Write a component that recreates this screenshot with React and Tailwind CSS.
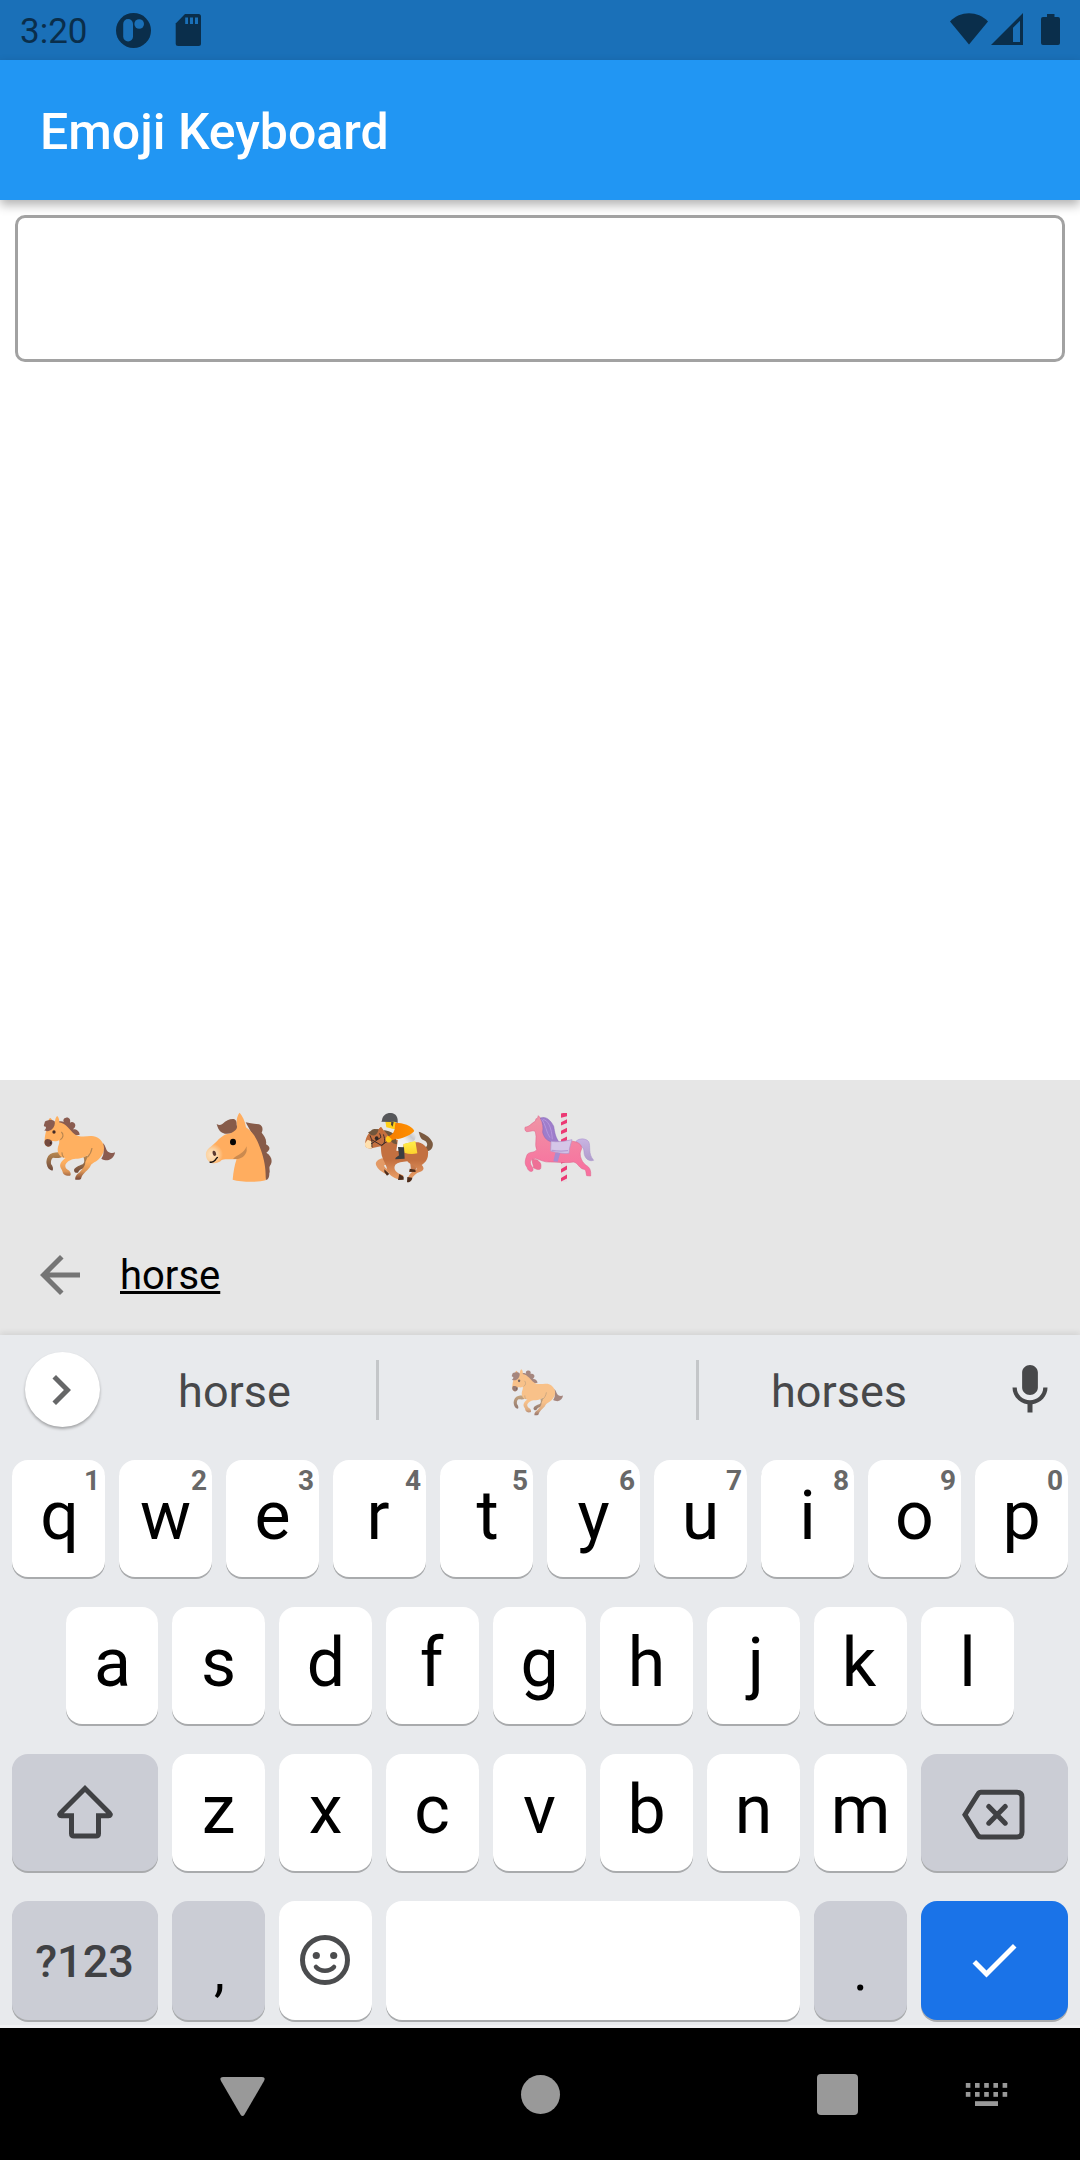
const DARK = "#0a2e4b";
const INK = "#47484a";

function Horse({ className }) {
  return (
    <svg className={className} viewBox="60 60 240 225">
      <defs>
        <linearGradient id="rearLeg" x1="0" y1="0" x2="0" y2="1">
          <stop offset="0" stopColor="#b98a52" />
          <stop offset="1" stopColor="#6f4a3c" />
        </linearGradient>
        <linearGradient id="coat" gradientUnits="userSpaceOnUse" x1="0" y1="215" x2="0" y2="268">
          <stop offset="0" stopColor="#ffb060" />
          <stop offset="0.55" stopColor="#dc9556" />
          <stop offset="1" stopColor="#7a4a3a" />
        </linearGradient>
      </defs>
      <path d="M249 160C258 168 256 178 264 185C271 190 280 190 285 187C284 199 275 209 262 211C255 211 249 209 244 206C252 196 252 184 248 175Z" fill="#8a5c50" />
      <path d="M124 186C111 188 100 186 91 192C81 199 78 213 80 222C82 233 87 240 97 242C101 238 99 229 93 222C92 213 94 206 99 203C108 203 116 206 126 201Z" fill="url(#rearLeg)" />
      <path d="M190 200C194 210 194 218 188 223C176 228 164 232 162 240C162 247 168 250 174 248C179 237 187 236 198 233C207 224 207 205 207 196Z" fill="url(#rearLeg)" />
      <path d="M108 98C118 92 126 93 132 96C128 91 131 84 138 83C147 81 153 89 150 98C156 93 166 98 166 106C166 112 162 116 159 118C169 117 178 123 179 134L158 138L116 112Z" fill="#8a5c50" />
      <path d="M88 98C83 91 88 85 91 84C96 87 98 93 98 98Z" fill="#f5a254" />
      <path d="M77 128C81 110 93 97 105 96C105 88 108 80 112 78C117 84 119 91 117 97C140 101 149 121 163 132C174 142 196 140 211 138C229 136 245 148 250 163C256 181 248 197 236 208C224 219 216 218 211 229C207 239 188 250 184 263C184 270 174 270 166 269C164 260 171 252 179 247C186 237 196 229 196 216C200 208 202 203 203 195C193 204 175 206 162 207C151 209 139 216 136 225C135 235 142 239 148 242C154 250 153 258 148 257C139 259 130 255 128 247C128 241 122 236 121 231C118 219 130 208 137 204C119 203 113 191 113 178C114 166 120 161 117 151C108 157 98 150 96 154C96 163 92 170 84 170C75 168 72 159 74 151C74 145 75 136 77 128Z" fill="url(#coat)" />
      <path d="M74 98C74 91 96 87 104 94C106 102 103 111 96 118C90 124 80 125 72 121C79 117 77 115 78 110C74 110 70 108 72 104Z" fill="#8a5c50" />
      <path d="M76 149C82 145 91 148 96 153C99 163 93 170 85 170C76 169 72 161 74 153Z" fill="#754b3f" />
      <ellipse cx="102" cy="126" rx="5" ry="5.5" fill="#422b28" />
      <ellipse cx="92" cy="159" rx="2.5" ry="4" fill="#3d2924" />
      <path d="M124 126C131 132 131 143 121 149M126 187C125 193 128 198 131 202M216 174C214 187 207 197 202 202" fill="none" stroke="#b88650" strokeWidth="3.5" />
    </svg>
  );
}

function HorseHead() {
  return (
    <svg className="h-[75px] w-[80px]" viewBox="540 60 240 225">
      <defs>
        <radialGradient id="muzzle" gradientUnits="userSpaceOnUse" cx="575" cy="194" r="34">
          <stop offset="0" stopColor="#ffe3c0" />
          <stop offset="0.5" stopColor="#fbd3a3" />
          <stop offset="1" stopColor="#ffad5f" />
        </radialGradient>
      </defs>
      <path d="M677 97C690 100 704 102 717 103C728 106 730 119 725 128C732 137 741 147 738 163C754 171 749 181 739 188C755 198 758 213 752 224C744 233 752 241 748 250C748 262 745 270 737 270L712 160Z" fill="#875b49" />
      <path d="M649 210L656 122L678 112C704 130 713 153 723 181C734 214 738 238 737 271C716 277 664 277 638 269C640 245 644 225 649 210Z" fill="#ffad5f" />
      <path d="M650 105C648 91 653 73 659 68C667 78 675 92 678 112C681 139 680 160 679 173C674 202 654 209 640 208C625 208 611 206 604 211C598 219 585 220 576 220C562 214 556 201 558 188C561 175 581 164 592 152C602 141 619 130 632 130Z" fill="url(#muzzle)" />
      <path d="M680 169C670 192 656 192 639 206C657 211 676 201 680 183Z" fill="#cb8a4f" />
      <path d="M590 102C597 107 602 105 608 101C617 92 628 87 638 87C646 87 650 91 650 105C653 112 650 117 646 121C635 132 618 134 609 129C599 125 594 117 590 102Z" fill="#875b49" />
      <ellipse cx="639" cy="156" rx="9" ry="10" fill="#050505" />
      <ellipse cx="583" cy="190" rx="5" ry="8" transform="rotate(-20 583 190)" fill="#5b3a31" />
      <path d="M569 216C576 218 582 215 586 210C590 205 589 203 594 202" fill="none" stroke="#17110f" strokeWidth="4" />
    </svg>
  );
}

function Jockey() {
  return (
    <svg className="h-[75px] w-[80px]" viewBox="60 60 240 225">
      <defs>
        <linearGradient id="bay" gradientUnits="userSpaceOnUse" x1="0" y1="210" x2="0" y2="275">
          <stop offset="0" stopColor="#c37040" />
          <stop offset="1" stopColor="#efa56c" />
        </linearGradient>
        <linearGradient id="silk" x1="0" y1="0" x2="1" y2="0">
          <stop offset="0" stopColor="#f57c00" />
          <stop offset="1" stopColor="#ff9100" />
        </linearGradient>
        <linearGradient id="cloth" x1="0" y1="0" x2="0" y2="1">
          <stop offset="0" stopColor="#fff04d" />
          <stop offset="1" stopColor="#fdd32c" />
        </linearGradient>
        <linearGradient id="breeches" x1="0" y1="1" x2="0.9" y2="0">
          <stop offset="0" stopColor="#fafafa" />
          <stop offset="0.5" stopColor="#f0f0f0" />
          <stop offset="0.75" stopColor="#c9c9cc" />
          <stop offset="1" stopColor="#f2f2f2" />
        </linearGradient>
      </defs>
      <path d="M236 125C250 129 270 139 278 158C281 172 272 183 261 183L255 174C266 167 263 155 250 150C241 146 239 135 236 125Z" fill="#7b5a40" />
      <path d="M126 205C109 210 104 219 110 229C116 241 130 248 143 255L148 240C137 236 131 229 133 225C145 224 157 220 163 212Z" fill="#e39a66" />
      <path d="M210 215L213 238C208 242 206 245 208 246L226 245L230 224Z" fill="#c77a4d" />
      <path d="M83 135C93 120 108 118 116 118L123 111L132 122C144 123 157 130 163 145C180 158 208 157 235 157C254 162 268 177 264 194C264 211 250 222 245 225C254 234 252 242 239 246C228 249 221 257 214 268L203 264C208 252 217 244 230 238C230 228 207 222 202 214C187 215 173 218 166 224C158 238 169 249 190 256L186 269C163 268 146 255 142 240C140 225 126 207 124 190C123 180 123 173 122 169L98 174C82 179 74 171 75 160C77 148 78 144 83 135Z" fill="url(#bay)" />
      <path d="M83 149L97 155L96 173C83 180 73 172 75 160Z" fill="#ffe0ae" />
      <path d="M84 126C91 127 94 118 103 117L116 118C114 126 110 135 104 136C95 138 90 134 84 126ZM131 120C139 121 153 124 163 133L172 163C155 163 149 148 144 136Z" fill="#71563c" />
      <path d="M90 136L95 149C97 160 95 167 96 172M95 149L124 166C134 164 137 151 130 133M119 130L123 142L93 162M124 166L151 148" fill="none" stroke="#402d29" strokeWidth="3" />
      <ellipse cx="110" cy="145" rx="5.5" ry="6" fill="#302724" />
      <path d="M118 115L123 111L130 121L127 132C120 129 117 124 118 115Z" fill="#c56b38" />
      <path d="M133 238L148 252L141 257L133 246ZM178 252L191 260V269L174 270ZM202 261L217 263C216 274 207 277 201 277ZM209 236L226 239L227 246L208 245Z" fill="#4e2d1b" />
      <path d="M136 94L167 94L168 116C162 118 156 117 152 115L139 112Z" fill="#ffd018" />
      <path d="M154 94L161 96L158 110L153 104Z" fill="#514536" />
      <path d="M126 91C127 76 140 68 153 69C168 70 175 82 173 99C165 94 157 95 151 96L124 95Z" fill="#56575a" />
      <path d="M222 119C230 134 228 149 219 155L191 163L188 183L169 182L174 146C185 140 207 135 222 119Z" fill="url(#breeches)" />
      <path d="M166 98C188 98 216 106 223 123C215 133 194 143 174 147L169 146L149 153L142 141C160 133 160 128 164 118Z" fill="url(#silk)" />
      <path d="M190 162L226 153L232 190C217 193 205 192 193 188Z" fill="url(#cloth)" />
      <path d="M174 171L192 172L194 206L166 208C166 201 174 200 177 196Z" fill="#3b3d40" />
      <path d="M144 137C137 139 135 150 140 155C147 161 158 154 154 146Z" fill="#ffca18" />
    </svg>
  );
}

function Carousel() {
  return (
    <svg className="h-[75px] w-[80px]" viewBox="540 60 240 225">
      <defs>
        <linearGradient id="pink" gradientUnits="userSpaceOnUse" x1="0" y1="80" x2="0" y2="250">
          <stop offset="0" stopColor="#ef94a5" />
          <stop offset="1" stopColor="#f8709f" />
        </linearGradient>
        <linearGradient id="lilac" x1="0" y1="0" x2="0" y2="1">
          <stop offset="0" stopColor="#c9b4e2" />
          <stop offset="1" stopColor="#b09ccc" />
        </linearGradient>
        <clipPath id="pole">
          <path d="M663 69H681V276H663Z" />
        </clipPath>
      </defs>
      <g clipPath="url(#pole)">
        <path d="M663 69H681V276H663Z" fill="#e4dfe1" />
        <path d="M660 71L684 66V78L660 84ZM660 98L684 86V98L660 108ZM660 124L684 112V124L660 134ZM660 150L684 138V150L660 160ZM660 217L684 209V213L660 222ZM660 239L684 225V237L660 250ZM660 266L684 252V264L660 276Z" fill="#ec3974" />
      </g>
      <path d="M708 154C717 144 738 144 746 155C753 169 743 190 761 211C745 216 733 204 732 187C732 175 727 166 710 167Z" fill="url(#lilac)" stroke="#a48fca" strokeWidth="1.5" />
      <path d="M578 206C588 210 593 208 596 214C604 219 604 228 602 236C596 241 589 238 580 233C582 226 573 214 578 206Z" fill="#ee7096" stroke="#dc6489" strokeWidth="1.5" />
      <path d="M588 86L592 86L595 77L602 85C622 93 629 119 632 146C643 160 666 157 687 153C711 153 729 163 724 179C719 188 719 200 728 215C737 230 750 226 752 247V258L740 257C737 247 740 244 733 238C717 237 714 217 700 216C681 220 653 216 631 216C613 218 598 208 586 205C570 206 566 219 578 233C580 238 579 243 576 244C568 246 562 238 561 231C552 222 556 207 562 193C570 184 583 190 590 179C583 163 592 145 586 125C579 119 573 125 560 125C555 123 553 116 556 111C567 112 576 98 586 94Z" fill="url(#pink)" stroke="#e0688f" strokeWidth="1.8" />
      <path d="M601 84C618 77 633 92 641 109C644 125 645 139 656 155H633C617 151 611 138 608 127C610 113 609 99 601 84Z" fill="#9e7dcb" stroke="#8565b8" strokeWidth="1.5" />
      <path d="M609 89C624 89 635 113 637 148M605 88C618 103 618 127 630 143" fill="none" stroke="#b596dd" strokeWidth="3" />
      <path d="M646 188H661L653 215L640 214Z" fill="#a98bd0" />
      <path d="M633 154C652 157 674 154 696 149C691 165 687 178 687 190C666 191 650 188 632 183Z" fill="#d5c6e8" stroke="#ae96ce" strokeWidth="2" />
      <path d="M635 181C653 184 669 184 684 182" fill="none" stroke="#b49bd2" strokeWidth="4" />
    </svg>
  );
}

function StatusBar() {
  return (
    <header className="flex h-[60px] items-start bg-[#1a70b8]">
      <span className="ml-[20px] mt-[11px] w-[96px] text-[35px] leading-[41px] text-[#0a2e4b]">3:20</span>
      <svg className="mt-[13px] h-[35px] w-[35px]" viewBox="116 13 35 35">
        <circle cx="133.5" cy="30.5" r="17.5" fill={DARK} />
        <rect x="123.2" y="19" width="9.8" height="22.5" rx="4.9" fill="#1a70b8" />
        <circle cx="139.2" cy="24" r="4.8" fill="#1a70b8" />
      </svg>
      <svg className="ml-[24px] mt-[14px] h-[32px] w-[27px]" viewBox="175 14 27 32">
        <path d="M185 14H198.5A2.5 2.5 0 0 1 201 16.500V43.500A2.500 2.500 0 0 1 198.500 46H178.200A2.500 2.500 0 0 1 175.700 43.500V23.500Z" fill={DARK} />
        <path d="M185.200 17.500H188V24H185.200ZM190 17.500H193V24H190ZM195 17.500H198V24H195Z" fill="#1a70b8" />
      </svg>
      <svg className="ml-auto mt-[13px] h-[32px] w-[38px]" viewBox="950 13 38 32">
        <path d="M950 21.500C960 10.500 978 10.500 988 21.500L969 44.500Z" fill={DARK} />
      </svg>
      <svg className="ml-[3px] mt-[13px] h-[32px] w-[32px]" viewBox="991 13 32 32">
        <path fillRule="evenodd" d="M1023 13V45H991ZM1020 20.800L1013 27.800V42H1020Z" fill={DARK} />
      </svg>
      <svg className="ml-[18px] mr-[20px] mt-[14px] h-[31px] w-[19px]" viewBox="1041 14 19 31">
        <path d="M1047 14H1054.500V17H1058A2 2 0 0 1 1060 19V43A2 2 0 0 1 1058 45H1043A2 2 0 0 1 1041 43V19A2 2 0 0 1 1043 17H1047Z" fill={DARK} />
      </svg>
    </header>
  );
}

const KEY = "relative flex h-[117px] justify-center rounded-[16px] shadow-[0_2px_0_#a9abad]";

// Optical centring for letters whose ink is off-centre in their advance width.
const NUDGE = {
  q: "pl-[2px]",
  r: "pr-[3px]",
  t: "pl-[2px]",
  d: "pl-[1px]",
  f: "pr-[2px]",
  j: "pl-[5px]",
  k: "pr-[3px]",
  c: "pr-[1px]",
  a: "pl-[1px]",
};

function LetterKey({ letter, hint, narrow }) {
  return (
    <div className={`${KEY} bg-white ${narrow ? "w-[92px]" : "w-[93px]"}`}>
      <span className={`mt-[16px] text-[68px] leading-[80px] text-black ${NUDGE[letter] ?? ""}`}>{letter}</span>
      {hint && (
        <span className="absolute right-[5px] top-[5px] text-[28px] font-bold leading-[32px] text-[#686868]">{hint}</span>
      )}
    </div>
  );
}

function Suggestions() {
  return (
    <div className="flex h-[125px] items-start">
      <div className="ml-[25px] mt-[17px] flex size-[75px] items-center justify-center rounded-full bg-white shadow-[0_2px_3px_rgba(0,0,0,0.3)]">
        <svg className="-ml-[3px] size-[60px]" viewBox="0 0 24 24">
          <path d="M10 6L8.590 7.410 13.170 12l-4.580 4.590L10 18l6-6z" fill="#666768" />
        </svg>
      </div>
      <span className="mt-[30px] w-[276px] pr-[7px] text-center text-[45px] leading-[53px] text-[#47484a]">horse</span>
      <div className="mt-[25px] h-[60px] w-[3px] bg-[#c4c6c9]" />
      <div className="flex w-[317px] justify-center pt-[30px]">
        <Horse className="h-[54px] w-[57.6px] opacity-70" />
      </div>
      <div className="mt-[25px] h-[60px] w-[3px] bg-[#c4c6c9]" />
      <span className="mt-[30px] w-[281px] pr-[1px] text-center text-[45px] leading-[53px] text-[#47484a]">horses</span>
      <svg className="ml-[20px] mt-[25px] size-[60px]" viewBox="0 0 24 24">
        <path d="M12 14c1.660 0 3.150-1.340 3.150-3L15.150 5c0-1.660-1.490-3-3.150-3S8.850 3.340 8.850 5v6c0 1.660 1.490 3 3.150 3zm5.300-3c0 3-2.540 5.100-5.300 5.100S6.700 14 6.700 11H5c0 3.410 2.720 6.230 6 6.720V21h2v-3.280c3.280-.480 6-3.300 6-6.720h-1.700z" fill={INK} />
      </svg>
    </div>
  );
}

function Keyboard() {
  return (
    <section className="h-[693px] border-b-[3px] border-[#f0f1f3] bg-[#e8eaed] shadow-[0_-2px_6px_rgba(0,0,0,0.09)]">
      <Suggestions />
      <div className="flex flex-col gap-[30px]">
        <div className="flex justify-center gap-[14px]">
          {[..."qwertyuiop"].map((c, i) => (
            <LetterKey key={c} letter={c} hint={String((i + 1) % 10)} />
          ))}
        </div>
        <div className="flex gap-[14px] pl-[66px]">
          {[..."asdfghjkl"].map((c, i) => (
            <LetterKey key={c} letter={c} narrow={i === 0} />
          ))}
        </div>
        <div className="flex gap-[14px] pl-[12px]">
          <div className={`${KEY} w-[146px] bg-[#cbcdd5]`}>
            <svg className="mt-[28px] h-[60px] w-[60px]" viewBox="55 1782 60 60">
              <path d="M85 1788.500L60.600 1813C59 1814.600 59.800 1815.700 61.500 1815.700H71.500V1833.500Q71.500 1836 74 1836H96Q98.500 1836 98.500 1833.500V1815.700H108.500C110.200 1815.700 111 1814.600 109.400 1813Z" fill="none" stroke="#404144" strokeWidth="5" />
            </svg>
          </div>
          {[..."zxcvbnm"].map((c) => (
            <LetterKey key={c} letter={c} />
          ))}
          <div className={`${KEY} w-[147px] bg-[#cbcdd5]`}>
            <svg className="mt-[31px] h-[60px] w-[70px]" viewBox="960 1785 70 60">
              <path d="M981 1792.300H1017Q1022 1792.300 1022 1797.300V1832Q1022 1837 1017 1837H981Q979 1837 978 1835.500L965 1814.700L978 1794Q979 1792.300 981 1792.300ZM988.800 1806.500L1005.200 1823.200M1005.200 1806.500L988.800 1823.200" fill="none" stroke="#404144" strokeWidth="5" strokeLinecap="round" />
            </svg>
          </div>
        </div>
        <div className="flex gap-[14px] pl-[12px]">
          <div className={`${KEY} !h-[119px] w-[146px] bg-[#cbcdd5]`}>
            <span className="mt-[34px] pr-[1px] text-[45px] font-medium leading-[53px] text-[#404144]">?123</span>
          </div>
          <div className={`${KEY} !h-[119px] w-[93px] bg-[#cbcdd5]`}>
            <span className="mt-[38px] pl-[2px] text-[55px] leading-[64px] text-black">,</span>
          </div>
          <div className={`${KEY} !h-[119px] w-[93px] bg-white`}>
            <svg className="mr-px mt-[34px] size-[50px]" viewBox="0 0 50 50" fill="none" stroke="#4b4c4e" strokeWidth="5">
              <circle cx="25" cy="25" r="22.500" />
              <circle cx="16.300" cy="20.500" r="3.600" fill="#4b4c4e" stroke="none" />
              <circle cx="33.700" cy="20.500" r="3.600" fill="#4b4c4e" stroke="none" />
              <path d="M16 32C20.500 37 29.500 37 34 32" strokeWidth="4.500" strokeLinecap="round" />
            </svg>
          </div>
          <div className={`${KEY} !h-[119px] w-[414px] bg-white`} />
          <div className={`${KEY} !h-[119px] w-[93px] bg-[#cbcdd5]`}>
            <span className="mt-[38px] text-[55px] leading-[64px] text-black">.</span>
          </div>
          <div className={`${KEY} !h-[119px] w-[147px] bg-[#1a73e8]`}>
            <svg className="mr-px mt-[29px] size-[60px]" viewBox="0 0 24 24">
              <path d="M9 16.170L4.830 12l-1.420 1.410L9 19 21 7l-1.410-1.410z" fill="#fff" />
            </svg>
          </div>
        </div>
      </div>
    </section>
  );
}

function NavBar() {
  return (
    <nav className="flex h-[132px] items-start bg-black">
      <svg className="ml-[220px] mt-[49px] h-[39px] w-[45px]" viewBox="0 0 45 39">
        <path d="M3 0H42Q46 0 44 4L24.500 37.500Q22.500 40.500 20.500 37.500L1 4Q-1 0 3 0Z" fill="#999" />
      </svg>
      <div className="ml-[256px] mt-[47px] size-[39px] rounded-full bg-[#999]" />
      <div className="ml-[257px] mt-[46px] size-[41px] rounded-[4px] bg-[#999]" />
      <svg className="ml-[107px] mt-[55px] h-[24px] w-[43px]" viewBox="0 0 43 24" fill="#999">
        {[0, 1, 2, 3, 4].map((i) => (
          <g key={i}>
            <rect x={0.8 + i * 9.2} y="0" width="4.600" height="4.800" />
            <rect x={0.8 + i * 9.2} y="9" width="4.600" height="4.800" />
          </g>
        ))}
        <rect x="10" y="18.200" width="23" height="4.800" />
      </svg>
    </nav>
  );
}

export default function App() {
  return (
    <div className="flex h-[2160px] w-[1080px] flex-col overflow-hidden bg-white font-['Roboto',sans-serif]">
      <StatusBar />
      <div className="h-[140px] bg-[#2196f3] pl-[40px] pt-[43px] text-[50px] font-medium leading-[58px] text-white shadow-[0_5px_10px_rgba(0,0,0,0.3)]">
        Emoji Keyboard
      </div>
      <div className="mx-[15px] mt-[15px] h-[147px] rounded-[10px] border-[3px] border-[#a2a2a2] bg-white" />
      <section className="mt-auto h-[255px] bg-[#e6e6e6]">
        <div className="flex gap-[80px] pl-[40px] pt-[30px]">
          <Horse className="h-[75px] w-[80px]" />
          <HorseHead />
          <Jockey />
          <Carousel />
        </div>
        <div className="mt-[60px] flex items-center pl-[30px]">
          <svg className="size-[60px]" viewBox="0 0 24 24">
            <path d="M20 11H7.830l5.590-5.590L12 4l-8 8 8 8 1.410-1.410L7.830 13H20v-2z" fill="#757575" />
          </svg>
          <span className="ml-[30px] text-[40px] leading-[47px] text-black underline decoration-[2.5px] underline-offset-[2px] [text-decoration-skip-ink:none]">horse</span>
        </div>
      </section>
      <Keyboard />
      <NavBar />
    </div>
  );
}
